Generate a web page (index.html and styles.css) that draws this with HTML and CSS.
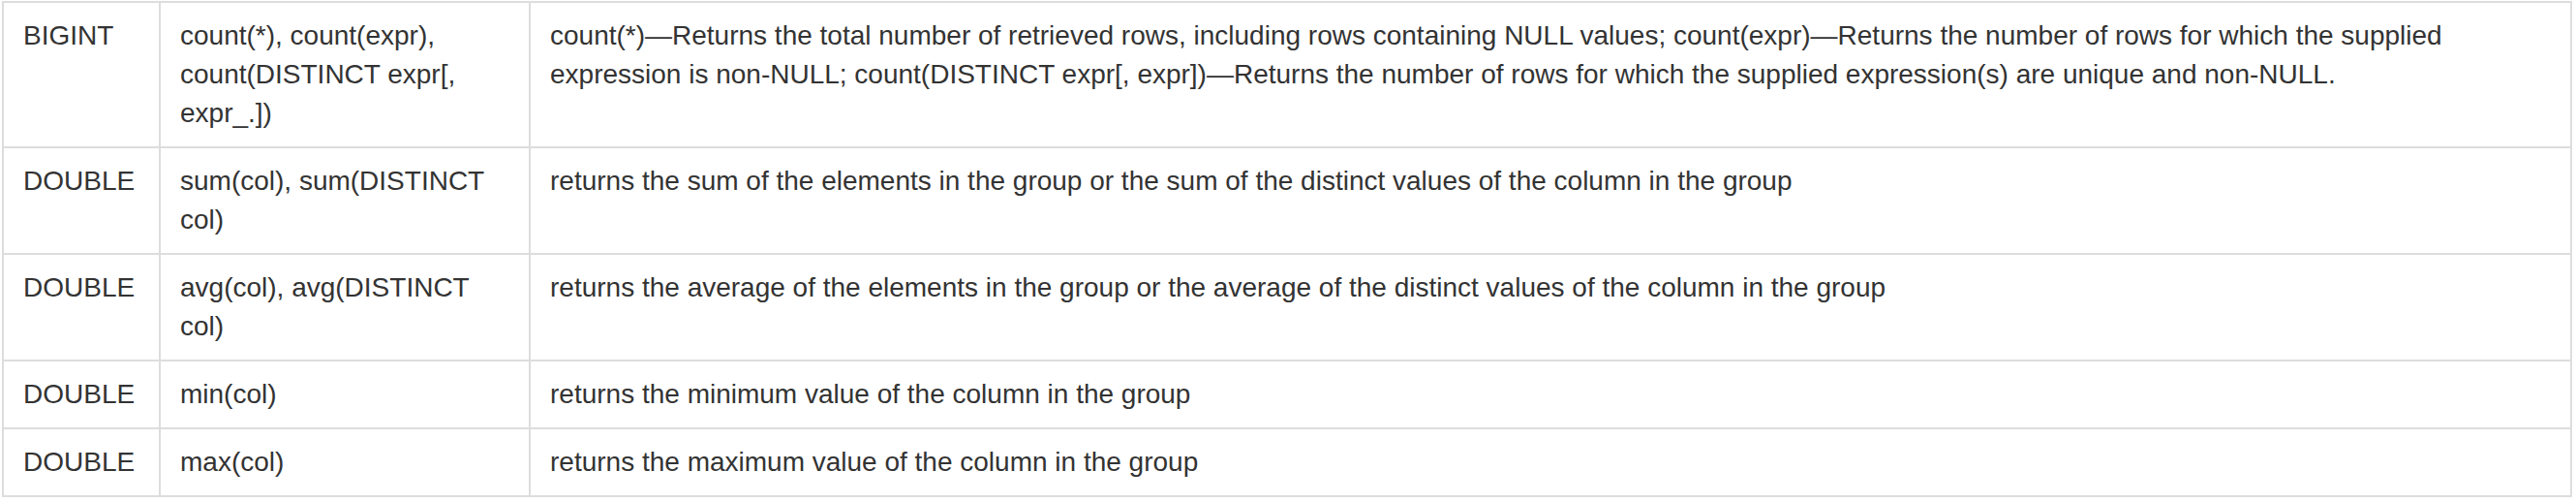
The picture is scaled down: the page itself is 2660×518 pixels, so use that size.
FILE: index.html
```html
<!DOCTYPE html>
<html>
<head>
<meta charset="utf-8">
<link rel="stylesheet" href="styles.css">
</head>
<body>
<div class="wrap">
<table class="func-table">
  <colgroup>
    <col class="c-type">
    <col class="c-func">
    <col class="c-desc">
  </colgroup>
  <tbody>
    <tr>
      <td>BIGINT</td>
      <td>count(*), count(expr), count(DISTINCT expr[, expr_.])</td>
      <td>count(*)—Returns the total number of retrieved rows, including rows containing NULL values; count(expr)—Returns the number of rows for which the supplied expression is non-NULL; count(DISTINCT expr[, expr])—Returns the number of rows for which the supplied expression(s) are unique and non-NULL.</td>
    </tr>
    <tr>
      <td>DOUBLE</td>
      <td>sum(col), sum(DISTINCT col)</td>
      <td>returns the sum of the elements in the group or the sum of the distinct values of the column in the group</td>
    </tr>
    <tr>
      <td>DOUBLE</td>
      <td>avg(col), avg(DISTINCT col)</td>
      <td>returns the average of the elements in the group or the average of the distinct values of the column in the group</td>
    </tr>
    <tr>
      <td>DOUBLE</td>
      <td>min(col)</td>
      <td>returns the minimum value of the column in the group</td>
    </tr>
    <tr>
      <td>DOUBLE</td>
      <td>max(col)</td>
      <td>returns the maximum value of the column in the group</td>
    </tr>
  </tbody>
</table>
</div>
</body>
</html>
```

FILE: styles.css
```css
html, body {
  margin: 0;
  padding: 0;
  background: #ffffff;
}

.wrap {
  padding: 1px 0 0 2px;
}

.func-table {
  border-collapse: collapse;
  table-layout: fixed;
  width: 2654px;
  font-family: "Liberation Sans", Arial, Helvetica, sans-serif;
  font-size: 28px;
  line-height: 40px;
  color: #333333;
}

.c-type { width: 162px; }
.c-func { width: 382px; }
.c-desc { width: auto; }

.func-table td {
  border: 2px solid #dddddd;
  padding: 14px 20px;
  vertical-align: top;
  text-align: left;
}
```
